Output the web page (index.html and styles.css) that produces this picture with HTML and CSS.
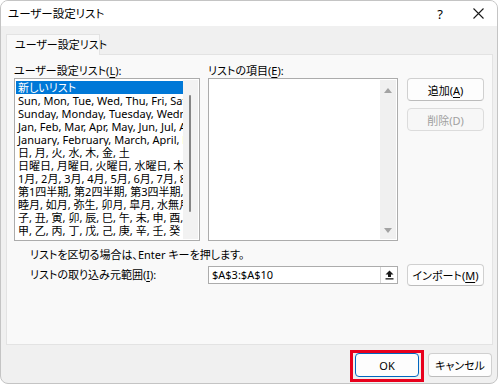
FILE: index.html
```html
<!DOCTYPE html>
<html lang="ja">
<head>
  <meta charset="UTF-8">
  <title>ユーザー設定リスト</title>
  <link rel="stylesheet" href="styles.css">
</head>
<body>
  <div class="window">
    <div class="titlebar">
      <span class="title">ユーザー設定リスト</span>
      <span class="help">?</span>
      <span class="close">
        <svg width="11" height="11" viewBox="0 0 11 11"><path d="M0.5 0.5 L10.5 10.5 M10.5 0.5 L0.5 10.5" stroke="#1a1a1a" stroke-width="1.1" fill="none"/></svg>
      </span>
    </div>

    <div class="dialog-body">
      <div class="tabs">
        <div class="tab">ユーザー設定リスト</div>
      </div>

      <div class="panel">
        <div class="columns">
          <div class="col">
            <div class="label">ユーザー設定リスト(<u>L</u>):</div>
            <div class="listbox">
              <div class="items">
                <div class="item selected">新しいリスト</div>
                <div class="item">Sun, Mon, Tue, Wed, Thu, Fri, Sat</div>
                <div class="item">Sunday, Monday, Tuesday, Wednesday</div>
                <div class="item">Jan, Feb, Mar, Apr, May, Jun, Jul, Aug</div>
                <div class="item">January, February, March, April, May</div>
                <div class="item">日, 月, 火, 水, 木, 金, 土</div>
                <div class="item">日曜日, 月曜日, 火曜日, 水曜日, 木曜日</div>
                <div class="item">1月, 2月, 3月, 4月, 5月, 6月, 7月, 8月</div>
                <div class="item">第1四半期, 第2四半期, 第3四半期, 第4</div>
                <div class="item">睦月, 如月, 弥生, 卯月, 皐月, 水無月</div>
                <div class="item">子, 丑, 寅, 卯, 辰, 巳, 午, 未, 申, 酉, 戌</div>
                <div class="item">甲, 乙, 丙, 丁, 戊, 己, 庚, 辛, 壬, 癸</div>
              </div>
              <div class="vscroll thin"><span class="thumb"></span></div>
            </div>
          </div>

          <div class="col">
            <div class="label">リストの項目(<u>E</u>):</div>
            <div class="listbox">
              <div class="items"></div>
              <div class="vscroll arrows">
                <span class="arrow up"></span>
                <span class="arrow down"></span>
              </div>
            </div>
          </div>

          <div class="col col-buttons">
            <button class="btn">追加(<u>A</u>)</button>
            <button class="btn" disabled>削除(D)</button>
          </div>
        </div>

        <p class="hint">リストを区切る場合は、Enter キーを押します。</p>

        <div class="import-row">
          <div class="label">リストの取り込み元範囲(<u>I</u>):</div>
          <div class="ref-input">
            <span class="ref-value">$A$3:$A$10</span>
            <span class="collapse">
              <svg width="9" height="10" viewBox="0 0 9 10"><path d="M4.5 0.5 L8.5 4.5 L6 4.5 L6 7 L3 7 L3 4.5 L0.5 4.5 Z" fill="#1a1a1a"/><rect x="0.5" y="8.2" width="8" height="1.3" fill="#1a1a1a"/></svg>
            </span>
          </div>
          <button class="btn">インポート(<u>M</u>)</button>
        </div>
      </div>
    </div>

    <div class="footer">
      <span class="highlight"><button class="btn btn-default">OK</button></span>
      <button class="btn">キャンセル</button>
    </div>
  </div>
</body>
</html>
```

FILE: styles.css
```css
:root {
  --face: #f0f0f0;
  --panel: #f9f9f9;
  --panel-border: #e3e3e3;
  --field-border: #acacac;
  --btn-border: #d0d0d0;
  --text: #000000;
  --text-disabled: #a0a0a0;
  --select: #0078d7;
  --accent: #0067c0;
  --mark: #e8001c;
}

* {
  margin: 0;
  padding: 0;
  box-sizing: border-box;
}

body {
  width: 500px;
  height: 385px;
  background: #ffffff;
  font-family: "Noto Sans", "Noto Sans CJK JP", sans-serif;
  font-size: 11px;
  color: var(--text);
  font-feature-settings: "palt";
  overflow: hidden;
}

u {
  text-decoration-thickness: 1px;
  text-underline-offset: 2px;
}

.window {
  width: 498px;
  height: 384px;
  border: 1px solid #c4c4c4;
  border-radius: 8px;
  background: var(--face);
  display: flex;
  flex-direction: column;
  overflow: hidden;
}

/* title bar */
.titlebar {
  height: 25px;
  background: #ffffff;
  display: flex;
  align-items: center;
  padding-left: 7px;
}
.title {
  flex: 1;
  line-height: 14px;
  font-size: 11.5px;
}
.help {
  width: 14px;
  text-align: center;
  font-size: 13px;
  margin-right: 26px;
}
.close {
  display: flex;
  margin-right: 13px;
}

/* body */
.dialog-body {
  flex: 1;
  display: flex;
  flex-direction: column;
  padding: 8px 4px 0 5px;
}
.tabs {
  display: flex;
}
.tab {
  height: 21px;
  width: 94px;
  padding-left: 8px;
  line-height: 20px;
  white-space: nowrap;
  background: var(--panel);
  border: 1px solid var(--panel-border);
  border-bottom: none;
  margin-bottom: -1px;
  position: relative;
}
.panel {
  flex: 1;
  background: var(--panel);
  border: 1px solid var(--panel-border);
  padding: 9px 0 0 7px;
}

.columns {
  display: grid;
  grid-template-columns: 186px 190px 78px;
  column-gap: 8px;
}
.columns .col:last-child {
  margin-left: 1px;
}
.label {
  line-height: 14px;
  height: 14px;
  white-space: nowrap;
}

.listbox {
  height: 163px;
  background: #ffffff;
  border: 1px solid var(--field-border);
  display: flex;
  padding: 1px;
}
.items {
  flex: 1;
  overflow: hidden;
  padding-top: 1px;
}
.item {
  height: 13px;
  line-height: 13px;
  padding-left: 2px;
  white-space: nowrap;
  overflow: hidden;
}
.item.selected {
  background: var(--select);
  color: #ffffff;
}

.vscroll {
  width: 15px;
  background: #f2f2f2;
  position: relative;
}
.vscroll.thin .thumb {
  position: absolute;
  left: 6px;
  top: 15px;
  width: 2px;
  height: 117px;
  border-radius: 1px;
  background: #858585;
}
.vscroll.arrows {
  width: 16px;
  background: #f0f0f0;
}
.arrow {
  position: absolute;
  left: 4px;
  width: 0;
  height: 0;
  border-left: 4px solid transparent;
  border-right: 4px solid transparent;
}
.arrow.up {
  top: 8px;
  border-bottom: 5px solid #a3a3a3;
}
.arrow.down {
  bottom: 6px;
  border-top: 5px solid #a3a3a3;
}

.col-buttons {
  padding-top: 14px;
  display: flex;
  flex-direction: column;
  gap: 7px;
}

.btn {
  height: 23px;
  font-family: inherit;
  font-size: 11px;
  font-feature-settings: "palt";
  color: var(--text);
  background: #fdfdfd;
  border: 1px solid var(--btn-border);
  border-bottom-color: #bcbcbc;
  border-radius: 4px;
}
.btn:disabled {
  color: var(--text-disabled);
  background: #f7f7f7;
  border-color: #dcdcdc;
}

.hint {
  margin-top: 7px;
  padding-left: 16px;
  line-height: 14px;
}

.import-row {
  margin-top: 2px;
  display: flex;
  align-items: center;
  height: 22px;
  padding-left: 16px;
}
.import-row .label {
  width: 178px;
}
.ref-input {
  width: 190px;
  height: 18px;
  background: #ffffff;
  border: 1px solid var(--field-border);
  display: flex;
  align-items: center;
  padding-left: 3px;
}
.ref-value {
  flex: 1;
  line-height: 14px;
}
.collapse {
  width: 17px;
  height: 16px;
  border-left: 1px solid #d6d6d6;
  display: flex;
  align-items: center;
  justify-content: center;
}
.import-row .btn {
  width: 77px;
  height: 22px;
  margin-left: 9px;
}

/* footer */
.footer {
  height: 38px;
  display: flex;
  justify-content: flex-end;
  align-items: flex-start;
  gap: 4px;
  padding: 8px 5px 0 0;
}
.footer .btn {
  width: 64px;
  height: 24px;
}
.highlight {
  display: flex;
  margin-top: -3px;
  border: 3px solid var(--mark);
  padding: 0 2px 2px 2px;
}
.btn-default {
  border: 1px solid var(--accent);
}
```
